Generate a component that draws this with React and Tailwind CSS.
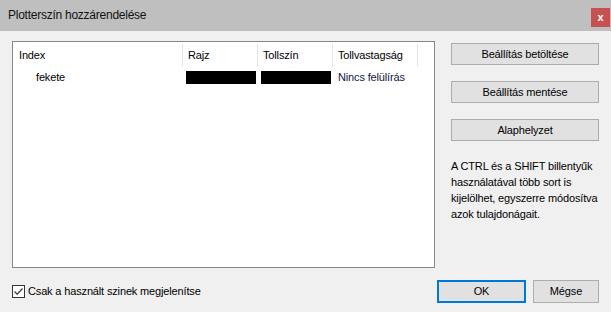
import React from "react";

export default function App() {
  const font = { fontFamily: '"Liberation Sans", Arial, sans-serif' };
  return (
    <div className="w-[611px] h-[312px] bg-[#f0f0f0] flex flex-col text-[11px] tracking-[-0.15px] text-black overflow-hidden" style={font}>
      <div className="h-[31px] bg-[#bfbfbf] flex items-start justify-between pl-[8px] pr-[1px]">
        <div className="text-[12px] tracking-[-0.25px] leading-[31px] text-[#111]">Plotterszín hozzárendelése</div>
        <div className="mt-[8px] w-[19px] h-[19px] bg-[#c75050] text-white text-[11px] font-bold leading-[18px] text-center">x</div>
      </div>
      <div className="flex pl-[12px] pt-[10px]">
        <div className="w-[423px] h-[227px] border border-[#828790] bg-white flex flex-col">
          <div className="flex h-[25px] items-stretch pt-[2px]">
            <div className="w-[170px] pl-[6px] flex items-center border-r border-[#e5e5e5]">Index</div>
            <div className="w-[75px] pl-[5px] flex items-center border-r border-[#e5e5e5]">Rajz</div>
            <div className="w-[75px] pl-[5px] flex items-center border-r border-[#e5e5e5]">Tollszín</div>
            <div className="w-[85px] pl-[5px] flex items-center border-r border-[#e5e5e5]">Tollvastagság</div>
          </div>
          <div className="flex h-[20px] items-center">
            <div className="w-[170px] pl-[23px]">fekete</div>
            <div className="w-[75px] pl-[3px]"><div className="w-[70px] h-[13px] bg-black" /></div>
            <div className="w-[75px] pl-[3px]"><div className="w-[70px] h-[13px] bg-black" /></div>
            <div className="w-[85px] pl-[5px] text-[#101840]">Nincs felülírás</div>
          </div>
        </div>
        <div className="ml-[16px] w-[148px] pt-[2px] flex flex-col">
          <button className="h-[22px] border border-[#adadad] bg-[#e1e1e1]">Beállítás betöltése</button>
          <button className="mt-[16px] h-[22px] border border-[#adadad] bg-[#e1e1e1]">Beállítás mentése</button>
          <button className="mt-[16px] h-[22px] border border-[#adadad] bg-[#e1e1e1]">Alaphelyzet</button>
          <p className="mt-[17px] leading-[16px]">A CTRL és a SHIFT billentyűk használatával több sort is kijelölhet, egyszerre módosítva azok tulajdonágait.</p>
        </div>
      </div>
      <div className="flex items-center pl-[12px] pt-[12px]">
        <div className="flex items-center w-[425px]">
          <div className="w-[13px] h-[13px] border border-[#333] bg-white flex items-center justify-center">
            <svg width="11" height="11" viewBox="0 0 11 11"><path d="M1.5 5.5 L4.2 8.2 L9.5 2.5" fill="none" stroke="#333" strokeWidth="1.2" /></svg>
          </div>
          <span className="ml-[3px]">Csak a használt szinek megjelenítse</span>
        </div>
        <button className="w-[89px] h-[23px] border-2 border-[#0078d7] bg-[#e1e1e1]">OK</button>
        <button className="ml-[7px] w-[66px] h-[23px] border border-[#adadad] bg-[#e1e1e1]">Mégse</button>
      </div>
    </div>
  );
}
